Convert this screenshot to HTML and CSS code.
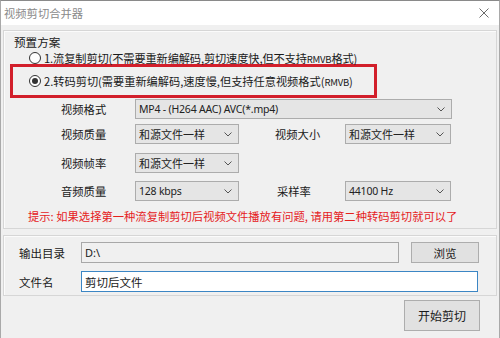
FILE: index.html
```html
<!DOCTYPE html>
<html lang="zh-CN">
<head>
<meta charset="utf-8">
<title>视频剪切合并器</title>
<link rel="stylesheet" href="styles.css">
</head>
<body>
<div class="window">
  <div class="titlebar">
    <span class="title">视频剪切合并器</span>
    <svg class="close" width="10" height="10" viewBox="0 0 10 10"><path d="M0.5 0.5 L9.5 9.5 M9.5 0.5 L0.5 9.5" stroke="#6b6b6b" stroke-width="1" fill="none"/></svg>
  </div>
  <div class="client">
    <div class="group preset">
      <div class="group-title">预置方案</div>
      <div class="radio-row r1"><span class="radio"></span><span>1.流复制剪切(不需要重新编解码,剪切速度快,但不支持<span class="sm">RMVB</span>格式)</span></div>
      <div class="mark">
        <div class="radio-row r2"><span class="radio checked"></span><span>2.转码剪切(需要重新编解码,速度慢,但支持任意视频格式(<span class="sm">RMVB</span>)</span></div>
      </div>
      <div class="frow row1">
        <span class="lbl">视频格式</span>
        <div class="combo wide"><span>MP4 - (H264 AAC) AVC(*.mp4)</span><svg class="chev" width="8" height="5" viewBox="0 0 8 5"><path d="M0.5 0.5 L4 4 L7.5 0.5" stroke="#555" fill="none"/></svg></div>
      </div>
      <div class="frow row2">
        <span class="lbl">视频质量</span>
        <div class="combo small"><span>和源文件一样</span><svg class="chev" width="8" height="5" viewBox="0 0 8 5"><path d="M0.5 0.5 L4 4 L7.5 0.5" stroke="#555" fill="none"/></svg></div>
        <span class="lbl2">视频大小</span>
        <div class="combo small2"><span>和源文件一样</span><svg class="chev" width="8" height="5" viewBox="0 0 8 5"><path d="M0.5 0.5 L4 4 L7.5 0.5" stroke="#555" fill="none"/></svg></div>
      </div>
      <div class="frow row3">
        <span class="lbl">视频帧率</span>
        <div class="combo small"><span>和源文件一样</span><svg class="chev" width="8" height="5" viewBox="0 0 8 5"><path d="M0.5 0.5 L4 4 L7.5 0.5" stroke="#555" fill="none"/></svg></div>
      </div>
      <div class="frow row4">
        <span class="lbl">音频质量</span>
        <div class="combo small"><span class="lat">128 kbps</span><svg class="chev" width="8" height="5" viewBox="0 0 8 5"><path d="M0.5 0.5 L4 4 L7.5 0.5" stroke="#555" fill="none"/></svg></div>
        <span class="lbl2 lbl3">采样率</span>
        <div class="combo small2"><span class="lat">44100 Hz</span><svg class="chev" width="8" height="5" viewBox="0 0 8 5"><path d="M0.5 0.5 L4 4 L7.5 0.5" stroke="#555" fill="none"/></svg></div>
      </div>
      <div class="tip">提示: 如果选择第一种流复制剪切后视频文件播放有问题, 请用第二种转码剪切就可以了</div>
    </div>
    <div class="group output">
      <div class="orow">
        <span class="olbl">输出目录</span>
        <div class="input ro">D:\</div>
        <button class="btn browse">浏览</button>
      </div>
      <div class="orow orow2">
        <span class="olbl">文件名</span>
        <div class="input focus">剪切后文件</div>
      </div>
    </div>
    <div class="actions">
      <button class="btn start">开始剪切</button>
    </div>
  </div>
</div>
</body>
</html>
```
FILE: styles.css
```css
* { box-sizing: border-box; }
html, body { margin: 0; padding: 0; }
body {
  width: 500px;
  height: 338px;
  overflow: hidden;
  font-family: "Noto Sans CJK SC", "Noto Sans", sans-serif;
  font-size: 11.5px;
  color: #1a1a1a;
  background: #f0f0f0;
}
.window {
  width: 500px;
  height: 338px;
  background: #f0f0f0;
  border-left: 1px solid #a9a9a9;
  border-right: 1px solid #a9a9a9;
  border-top: 1px solid #8a8a8a;
}
.titlebar {
  height: 24px;
  background: #ffffff;
  display: flex;
  align-items: center;
  justify-content: space-between;
  padding: 0 10px 0 3px;
}
.title {
  color: #8a8a8a;
  font-size: 11.3px;
  line-height: 14px;
}
.close { display: block; margin-top: 0; }
.client {
  padding: 0 2px 0 2px;
}
.group {
  border: 1px solid #d6d6d6;
  box-shadow: inset 1px 1px 0 #fbfbfb;
}
.preset {
  margin-top: 5px;
  height: 199px;
  padding-top: 4px;
}
.group-title {
  line-height: 15px;
  padding-left: 10px;
  font-size: 11.6px;
}
.radio-row {
  display: flex;
  align-items: center;
  height: 14px;
  line-height: 14px;
  white-space: nowrap;
  font-size: 11.2px;
}
.r1 { margin-top: 1px; padding-left: 25px; }
.r1 > span:last-child { letter-spacing: -0.1px; }
.radio {
  width: 12px;
  height: 12px;
  border: 1px solid #333;
  border-radius: 50%;
  background: #fff;
  margin-right: 3px;
  display: flex;
  align-items: center;
  justify-content: center;
  flex: none;
}
.radio.checked::after {
  content: "";
  width: 6px;
  height: 6px;
  border-radius: 50%;
  background: #333;
}
.sm { font-size: 9.5px; letter-spacing: -0.2px; }
.mark {
  margin-top: -1px;
  margin-left: 6px;
  width: 367px;
  height: 34px;
  border: 3px solid #d21f2b;
  display: flex;
  align-items: center;
  padding-left: 16px;
}
.frow {
  display: flex;
  align-items: center;
  height: 20px;
  padding-left: 57px;
}
.row1 { margin-top: 1px; }
.row2 { margin-top: 5px; }
.row3 { margin-top: 9px; }
.row4 { margin-top: 8px; }
.lbl { width: 74px; font-size: 11.3px; }
.lbl2 { width: 70px; margin-left: 36px; font-size: 11.3px; }
.lbl3 { padding-left: 2px; }
.combo {
  height: 20px;
  background: #e5e5e5;
  border: 1px solid #acacac;
  display: flex;
  align-items: center;
  justify-content: space-between;
  padding: 0 6px 0 3px;
  font-size: 11px;
  color: #222;
  white-space: nowrap;
}
.combo .lat, .wide span { font-family: "Noto Sans", sans-serif; font-size: 10.5px; letter-spacing: -0.2px; }
.wide { width: 317px; }
.small { width: 104px; }
.small2 { width: 106px; }
.chev { display: block; flex: none; }
.tip {
  margin-top: 7px;
  padding-left: 24px;
  line-height: 16px;
  color: #e5211d;
  font-size: 11.3px;
  white-space: nowrap;
}
.output {
  margin-top: 6px;
  height: 61px;
  padding-top: 6px;
}
.orow {
  display: flex;
  align-items: center;
  height: 21px;
  padding-left: 15px;
}
.orow2 { margin-top: 8px; }
.olbl { width: 62px; font-size: 11.5px; }
.input {
  height: 21px;
  border: 1px solid #a8a8a8;
  background: #f0f0f0;
  display: flex;
  align-items: center;
  padding-left: 3px;
  font-size: 11.5px;
  width: 318px;
}
.input.ro { font-family: "Noto Sans", sans-serif; font-size: 11px; }
.input.focus {
  width: 397px;
  background: #ffffff;
  border-color: #3c86c4;
}
.btn {
  font-family: "Noto Sans CJK SC", sans-serif;
  font-size: 11.5px;
  background: #e1e1e1;
  border: 1px solid #adadad;
  color: #1a1a1a;
  padding: 0;
  margin: 0;
}
.browse {
  margin-left: 12px;
  width: 68px;
  height: 21px;
}
.actions {
  display: flex;
  justify-content: flex-end;
  padding-right: 17px;
  margin-top: 4px;
}
.start {
  width: 76px;
  height: 31px;
  font-size: 12px;
}
```
